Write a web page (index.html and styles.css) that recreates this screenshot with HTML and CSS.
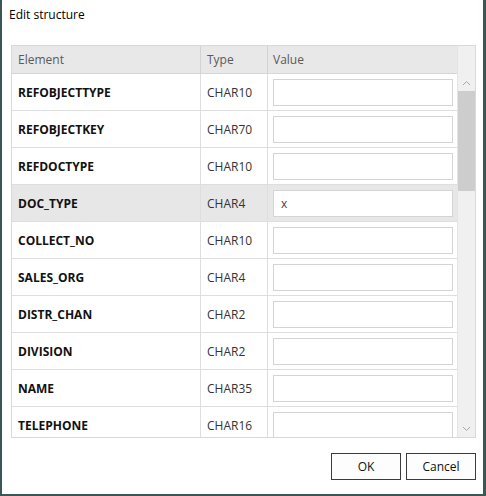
FILE: index.html
```html
<!DOCTYPE html>
<html>
<head>
<meta charset="utf-8">
<link rel="stylesheet" href="styles.css">
</head>
<body>
<div class="window">
  <div class="title">Edit structure</div>
  <div class="grid-wrap">
    <div class="grid">
      <div class="row hdr">
        <div class="c c1">Element</div>
        <div class="c c2">Type</div>
        <div class="c c3">Value</div>
      </div>
      <div class="row"><div class="c c1 b">REFOBJECTTYPE</div><div class="c c2">CHAR10</div><div class="c c3"><div class="inp"></div></div></div>
      <div class="row"><div class="c c1 b">REFOBJECTKEY</div><div class="c c2">CHAR70</div><div class="c c3"><div class="inp"></div></div></div>
      <div class="row"><div class="c c1 b">REFDOCTYPE</div><div class="c c2">CHAR10</div><div class="c c3"><div class="inp"></div></div></div>
      <div class="row sel"><div class="c c1 b">DOC_TYPE</div><div class="c c2">CHAR4</div><div class="c c3"><div class="inp">x</div></div></div>
      <div class="row"><div class="c c1 b">COLLECT_NO</div><div class="c c2">CHAR10</div><div class="c c3"><div class="inp"></div></div></div>
      <div class="row"><div class="c c1 b">SALES_ORG</div><div class="c c2">CHAR4</div><div class="c c3"><div class="inp"></div></div></div>
      <div class="row"><div class="c c1 b">DISTR_CHAN</div><div class="c c2">CHAR2</div><div class="c c3"><div class="inp"></div></div></div>
      <div class="row"><div class="c c1 b">DIVISION</div><div class="c c2">CHAR2</div><div class="c c3"><div class="inp"></div></div></div>
      <div class="row"><div class="c c1 b">NAME</div><div class="c c2">CHAR35</div><div class="c c3"><div class="inp"></div></div></div>
      <div class="row"><div class="c c1 b">TELEPHONE</div><div class="c c2">CHAR16</div><div class="c c3"><div class="inp"></div></div></div>
    </div>
    <div class="vscroll">
      <div class="filler"></div>
      <div class="sbtn">
        <svg width="9" height="6" viewBox="0 0 9 6"><path d="M1 5 L4.5 1.5 L8 5" fill="none" stroke="#a6a6a6" stroke-width="1"/></svg>
      </div>
      <div class="track"><div class="thumb"></div></div>
      <div class="sbtn">
        <svg width="9" height="6" viewBox="0 0 9 6"><path d="M1 1 L4.5 4.5 L8 1" fill="none" stroke="#a6a6a6" stroke-width="1"/></svg>
      </div>
    </div>
  </div>
  <div class="actions">
    <button class="btn">OK</button>
    <button class="btn">Cancel</button>
  </div>
</div>
</body>
</html>
```
FILE: styles.css
```css
* { box-sizing: border-box; }
html, body { margin: 0; padding: 0; background: #ffffff; }
.window {
  width: 486px;
  height: 496px;
  border-left: 2px solid #3b5656;
  border-right: 3px solid #3b5656;
  border-bottom: 2px solid #3b5656;
  background: #ffffff;
  font-family: "Open Sans", "Noto Sans", sans-serif;
  font-size: 12px;
  color: #000;
  display: flex;
  flex-direction: column;
}
.title {
  height: 45px;
  padding: 7px 0 0 7px;
  line-height: 16px;
  font-size: 12px;
  color: #000;
}
.grid-wrap {
  margin: 0 7px 0 9px;
  height: 393px;
  border: 1px solid #d9d9d9;
  display: flex;
  overflow: hidden;
}
.grid {
  width: 445px;
  overflow: hidden;
}
.row {
  display: flex;
  height: 37px;
  border-bottom: 1px solid #dedede;
  background: #ffffff;
}
.row.hdr {
  height: 28px;
  background: #e8e8e8;
  border-bottom: 1px solid #d6d6d6;
  color: #5a5a5a;
}
.row.sel { background: #e7e7e7; }
.c {
  display: flex;
  align-items: center;
  padding-left: 6px;
  white-space: nowrap;
  color: #333;
}
.hdr .c { color: #5a5a5a; }
.c1 { width: 189px; border-right: 1px solid #dedede; }
.c2 { width: 67px; border-right: 1px solid #dedede; }
.c3 { width: 189px; padding-left: 5px; }
.hdr .c1, .hdr .c2 { border-right-color: #d2d2d2; }
.b { font-weight: 700; color: #111; }
.inp {
  width: 180px;
  height: 27px;
  border: 1px solid #d4d4d4;
  background: #ffffff;
  padding-left: 7px;
  display: flex;
  align-items: center;
  color: #444;
  font-size: 12px;
}
.vscroll {
  width: 18px;
  background: #f0f0f0;
  border-left: 1px solid #e4e4e4;
  display: flex;
  flex-direction: column;
}
.filler { height: 28px; }
.sbtn {
  height: 17px;
  display: flex;
  align-items: center;
  justify-content: center;
}
.track { flex: 1; }
.thumb {
  height: 100px;
  background: #cdcdcd;
}
.actions {
  display: flex;
  justify-content: flex-end;
  gap: 5px;
  margin: 15px 7px 0 0;
}
.btn {
  width: 70px;
  height: 27px;
  border: 1px solid #3c3c3c;
  background: #fdfdfd;
  font-family: "Open Sans", "Noto Sans", sans-serif;
  font-size: 12px;
  color: #111;
  padding: 0;
}
```
